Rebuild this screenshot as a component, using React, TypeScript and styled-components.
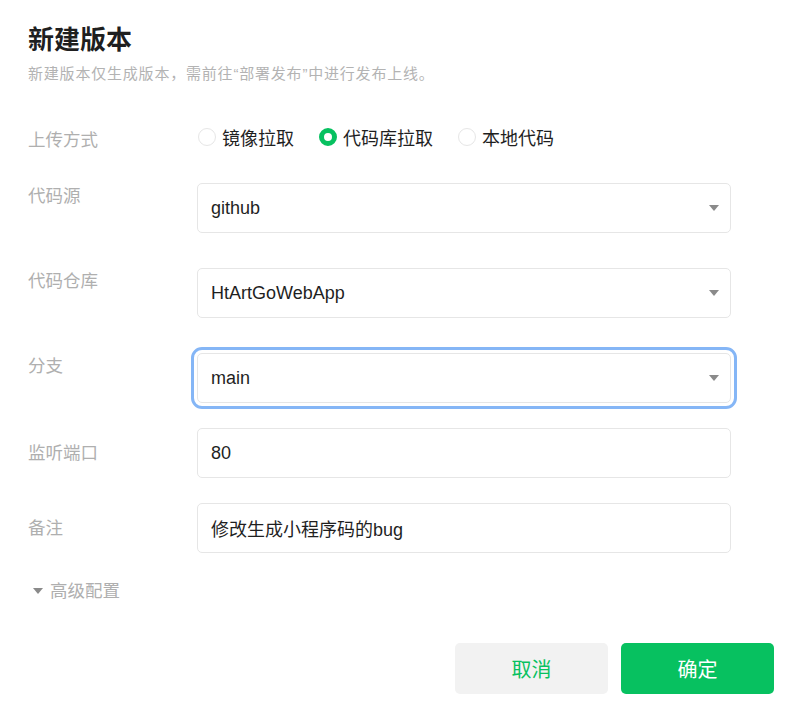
import styled, { createGlobalStyle } from 'styled-components';

const GlobalStyle = createGlobalStyle`
  body {
    margin: 0;
    background: #ffffff;
    font-family: "Liberation Sans", "Noto Sans CJK SC", sans-serif;
  }
`;

const green = '#07c160';

const Page = styled.div`
  padding: 24px 32px 0 28px;
  width: 806px;
  box-sizing: border-box;
`;

const Title = styled.h1`
  margin: 0;
  font-size: 26px;
  line-height: 32px;
  font-weight: 700;
  color: rgba(0, 0, 0, 0.88);
`;

const Desc = styled.p`
  margin: 8px 0 0;
  font-size: 15px;
  line-height: 20px;
  letter-spacing: 0.8px;
  color: #b3b3b3;
`;

const FormBody = styled.div`
  margin-top: 37px;
  display: flex;
  flex-direction: column;
`;

const Field = styled.div<{ $gap: number }>`
  display: grid;
  grid-template-columns: 169px 534px;
  margin-bottom: ${(p) => p.$gap}px;
`;

const Label = styled.div<{ $lh: number; $pt?: number }>`
  font-size: 17.5px;
  line-height: ${(p) => p.$lh}px;
  padding-top: ${(p) => p.$pt ?? 0}px;
  color: #afafaf;
`;

const RadioGroup = styled.div`
  display: flex;
  align-items: center;
  height: 32px;
  gap: 24px;
`;

const RadioOption = styled.label`
  display: flex;
  align-items: center;
  gap: 6px;
  font-size: 18px;
  color: #1f1f1f;
`;

const RadioDot = styled.span<{ $checked?: boolean }>`
  width: 18px;
  height: 18px;
  box-sizing: border-box;
  border-radius: 50%;
  border: ${(p) => (p.$checked ? `5px solid ${green}` : '1px solid #e6e6e6')};
  background: #fff;
  margin-left: 1px;
`;

const Box = styled.div<{ $focused?: boolean }>`
  height: 50px;
  box-sizing: border-box;
  border: 1px solid #e6e6e6;
  border-radius: 5px;
  padding: 0 14px 0 13px;
  display: flex;
  align-items: center;
  justify-content: space-between;
  font-size: 18px;
  color: #1f1f1f;
  background: #fff;
  outline: ${(p) => (p.$focused ? '3px solid #85b6f6' : 'none')};
  outline-offset: 3px;
`;

const Caret = styled.span`
  width: 0;
  height: 0;
  border-left: 5px solid transparent;
  border-right: 5px solid transparent;
  border-top: 6px solid #8a8a8a;
  margin-right: -3px;
`;

const Advanced = styled.div`
  display: flex;
  align-items: center;
  gap: 7px;
  margin-left: 5px;
  font-size: 17.5px;
  line-height: 24px;
  color: #afafaf;
`;

const SmallCaret = styled.span`
  width: 0;
  height: 0;
  border-left: 5px solid transparent;
  border-right: 5px solid transparent;
  border-top: 6px solid #8a8a8a;
`;

const Footer = styled.div`
  margin-top: 40px;
  display: flex;
  justify-content: flex-end;
  gap: 13px;
`;

const Button = styled.button<{ $primary?: boolean }>`
  all: unset;
  width: 153px;
  height: 51px;
  border-radius: 5px;
  display: inline-flex;
  align-items: center;
  justify-content: center;
  font-family: "Liberation Sans", "Noto Sans CJK SC", sans-serif;
  font-size: 20px;
  font-weight: 400;
  background: ${(p) => (p.$primary ? green : '#f2f2f2')};
  color: ${(p) => (p.$primary ? '#ffffff' : green)};
`;

const selects = [
  { label: '代码源', value: 'github', gap: 35 },
  { label: '代码仓库', value: 'HtArtGoWebApp', gap: 35 },
  { label: '分支', value: 'main', gap: 25, focused: true },
];

const inputs = [
  { label: '监听端口', value: '80' },
  { label: '备注', value: '修改生成小程序码的bug' },
];

export default function App() {
  return (
    <>
      <GlobalStyle />
      <Page>
        <Title>新建版本</Title>
        <Desc>新建版本仅生成版本，需前往“部署发布”中进行发布上线。</Desc>
        <FormBody>
          <Field $gap={27}>
            <Label $lh={32} $pt={3}>上传方式</Label>
            <RadioGroup>
              <RadioOption>
                <RadioDot />
                镜像拉取
              </RadioOption>
              <RadioOption>
                <RadioDot $checked />
                代码库拉取
              </RadioOption>
              <RadioOption>
                <RadioDot />
                本地代码
              </RadioOption>
            </RadioGroup>
          </Field>
          {selects.map((s) => (
            <Field key={s.label} $gap={s.gap}>
              <Label $lh={26}>{s.label}</Label>
              <Box $focused={s.focused}>
                <span>{s.value}</span>
                <Caret />
              </Box>
            </Field>
          ))}
          {inputs.map((s) => (
            <Field key={s.label} $gap={s.label === '备注' ? 26 : 25}>
              <Label $lh={50}>{s.label}</Label>
              <Box>
                <span>{s.value}</span>
              </Box>
            </Field>
          ))}
          <Advanced>
            <SmallCaret />
            高级配置
          </Advanced>
        </FormBody>
        <Footer>
          <Button>取消</Button>
          <Button $primary>确定</Button>
        </Footer>
      </Page>
    </>
  );
}
